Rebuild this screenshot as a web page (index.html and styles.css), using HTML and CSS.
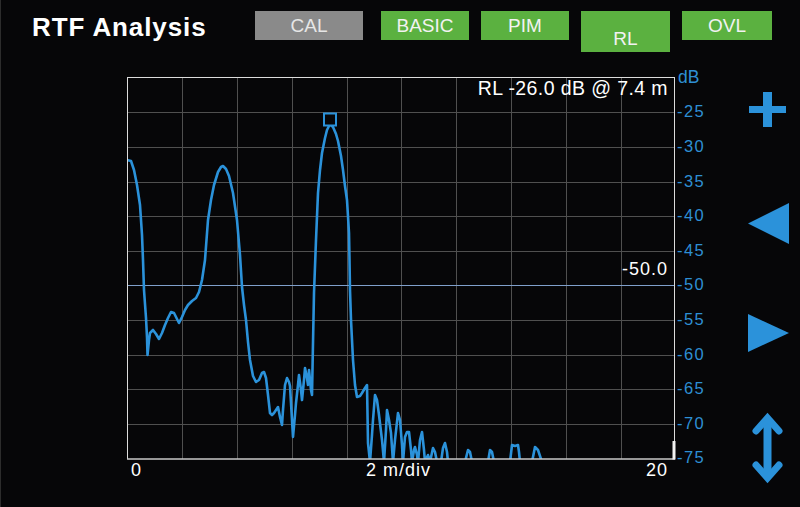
FILE: index.html
```html
<!DOCTYPE html>
<html lang="en">
<head>
<meta charset="utf-8">
<title>RTF Analysis</title>
<link rel="stylesheet" href="styles.css">
</head>
<body>
<div class="screen">
  <header class="top">
    <h1 class="title">RTF Analysis</h1>
    <nav class="tabs">
      <div class="tab tab-gray tab-cal">CAL</div>
      <div class="tab tab-green tab-basic">BASIC</div>
      <div class="tab tab-green tab-pim">PIM</div>
      <div class="tab tab-green tab-rl">RL</div>
      <div class="tab tab-green tab-ovl">OVL</div>
    </nav>
  </header>
  <main class="main">
    <svg class="chart" width="740" height="447" viewBox="0 60 740 447" xmlns="http://www.w3.org/2000/svg">
      <defs>
        <clipPath id="plotclip"><rect x="127" y="77" width="548" height="382"/></clipPath>
      </defs>
      <g class="grid">
        <line x1="182.5" y1="77" x2="182.5" y2="459"/>
        <line x1="237.5" y1="77" x2="237.5" y2="459"/>
        <line x1="292.5" y1="77" x2="292.5" y2="459"/>
        <line x1="347.5" y1="77" x2="347.5" y2="459"/>
        <line x1="401.5" y1="77" x2="401.5" y2="459"/>
        <line x1="456.5" y1="77" x2="456.5" y2="459"/>
        <line x1="511.5" y1="77" x2="511.5" y2="459"/>
        <line x1="566.5" y1="77" x2="566.5" y2="459"/>
        <line x1="621.5" y1="77" x2="621.5" y2="459"/>
        <line x1="127" y1="112.5" x2="675" y2="112.5"/>
        <line x1="127" y1="147.5" x2="675" y2="147.5"/>
        <line x1="127" y1="182.5" x2="675" y2="182.5"/>
        <line x1="127" y1="216.5" x2="675" y2="216.5"/>
        <line x1="127" y1="251.5" x2="675" y2="251.5"/>
        <line x1="127" y1="320.5" x2="675" y2="320.5"/>
        <line x1="127" y1="355.5" x2="675" y2="355.5"/>
        <line x1="127" y1="389.5" x2="675" y2="389.5"/>
        <line x1="127" y1="424.5" x2="675" y2="424.5"/>
      </g>
      <line class="refline" x1="127" y1="285.5" x2="675" y2="285.5"/>
      <polyline class="trace" clip-path="url(#plotclip)" points="127,160 131,161 134,170 137,185 140,205 142,235 143,260 144,290 146,318 147,337 147.5,355 149,340 150,333 153,330 156,334 159,339 162,333 165,325 168,318 171,312 174,313 176,317 179,323 182,317 185,310 188,305 192,301 196,298 199,292 202,280 205,260 208,220 211,200 214,185 218,172 221,167 223,166 226,169 229,176 233,193 237,220 240,255 242,287 244,305 246,320 248,342 250,360 253,376 256,382 259,380 262,373 264,372 266,378 268,395 270,413 272,415 274,413 276,410 278,407 280,417 282,425 283,410 285,385 287,378 289,382 290,386 292,420 293,437 295,415 296,403 298,385 299,375 301,390 302,400 304,380 305,368 307,378 308,385 309,370 311,390 312,395 313,343 314,293 316,240 318,193 320,170 322,153 325,138 327,130 330,124 333,127 336,134 338,141 341,156 343,170 345,186 347,200 349,233 349.5,260 350,290 351,320 353,360 355,385 357,397 360,396 362,393 365,388 367,385 368,443 370,462 372,435 373,420 375,395 377,400 379,415 382,440 384,462 386,430 387,410 389,420 391,433 393,462 395,440 398,413 400,420 402,445 403,462 405,437 407,432 409,432 411,450 412,462 414,450 415,447 417,455 418,462 420,440 422,432 424,450 425,462 428,455 430,462 433,448 435,452 437,462 441,462 443,448 445,443 447,452 448,462 465,462 468,450 470,452 472,462 488,462 490,450 492,452 494,462 510,462 512,445 515,446 518,445 519,452 520,462 532,462 535,447 538,450 542,462 675,462"/>
      <rect class="marker" x="324" y="113.5" width="12" height="12"/>
      <rect class="frame" x="127.5" y="77.5" width="547" height="381.5"/>
      <line class="frame-bottom" x1="127" y1="459" x2="675" y2="459"/>
      <rect class="endbar" x="672.5" y="441" width="3" height="18.5"/>
      <text class="readout" x="668" y="94.5">RL -26.0 dB @ 7.4 m</text>
      <text class="reflabel" x="668" y="275">-50.0</text>
      <g class="ylabels">
        <text class="unit" x="678" y="83">dB</text>
        <text x="677" y="117">-25</text>
        <text x="677" y="152">-30</text>
        <text x="677" y="187">-35</text>
        <text x="677" y="221">-40</text>
        <text x="677" y="256">-45</text>
        <text x="677" y="290">-50</text>
        <text x="677" y="325">-55</text>
        <text x="677" y="360">-60</text>
        <text x="677" y="394">-65</text>
        <text x="677" y="429">-70</text>
        <text x="677" y="463">-75</text>
      </g>
      <g class="xlabels">
        <text x="131" y="476">0</text>
        <text x="366" y="476">2 m/div</text>
        <text x="646" y="476">20</text>
      </g>
    </svg>
    <div class="controls">
      <svg class="icon icon-plus" width="42" height="36" viewBox="748 92 42 36" xmlns="http://www.w3.org/2000/svg">
        <rect x="749" y="106" width="37" height="7"/>
        <rect x="763" y="92" width="9" height="35"/>
      </svg>
      <svg class="icon icon-left" width="42" height="42" viewBox="748 203 42 42" xmlns="http://www.w3.org/2000/svg">
        <polygon points="748,223.5 789,203 789,244"/>
      </svg>
      <svg class="icon icon-right" width="42" height="40" viewBox="748 313 42 40" xmlns="http://www.w3.org/2000/svg">
        <polygon points="748,314 789,333 748,352"/>
      </svg>
      <svg class="icon icon-updown" width="42" height="74" viewBox="748 411 42 74" xmlns="http://www.w3.org/2000/svg">
        <line class="stem" x1="767.5" y1="420" x2="767.5" y2="476"/>
        <polyline class="head" points="756,431 767.5,418 779,431"/>
        <polyline class="head" points="756,465 767.5,478 779,465"/>
      </svg>
    </div>
  </main>
</div>
</body>
</html>
```
FILE: styles.css
```css
html, body {
  margin: 0;
  padding: 0;
  background: #060608;
}

.screen {
  width: 800px;
  height: 507px;
  background: #060608;
  box-shadow: inset 1px 0 0 #2c2c2c;
  overflow: hidden;
  font-family: "Liberation Sans", Arial, Helvetica, sans-serif;
}

.top {
  display: flex;
  align-items: flex-start;
  height: 60px;
  padding-top: 11px;
  box-sizing: border-box;
}

.title {
  margin: 2px 0 0 0;
  width: 255px;
  padding-left: 32px;
  box-sizing: border-box;
  color: #ffffff;
  font-size: 26px;
  font-weight: bold;
  line-height: 29px;
  letter-spacing: 0.9px;
  white-space: nowrap;
}

.tabs {
  display: flex;
  align-items: flex-start;
  gap: 12px;
}

.tab {
  height: 29px;
  display: flex;
  align-items: center;
  justify-content: center;
  font-size: 19px;
  color: #f2f2f2;
}

.tab-gray {
  background: #8a8a8a;
  color: #e6e6e6;
}

.tab-green {
  background: #5bb140;
}

.tab-cal { width: 108px; margin-right: 6px; }
.tab-basic { width: 88px; }
.tab-pim { width: 88px; }
.tab-rl {
  width: 89px;
  height: 41px;
  align-items: flex-end;
  padding-bottom: 2px;
  box-sizing: border-box;
}
.tab-ovl { width: 90px; }

.main {
  display: flex;
  height: 447px;
}

.chart {
  display: block;
  flex: 0 0 740px;
}

.grid line {
  stroke: #4f4f4f;
  stroke-width: 1;
}

.refline {
  stroke: #7f9fcb;
  stroke-width: 1;
}

.trace {
  fill: none;
  stroke: #2b92da;
  stroke-width: 2.6;
  stroke-linejoin: round;
}

.marker {
  fill: #060608;
  stroke: #2b92da;
  stroke-width: 2;
}

.frame {
  fill: none;
  stroke: #dcdcdc;
  stroke-width: 1;
}

.frame-bottom {
  stroke: #bdbdbd;
  stroke-width: 1;
}

.endbar {
  fill: #f2f2f2;
}

.readout {
  fill: #ffffff;
  font-size: 19.5px;
  letter-spacing: 0.4px;
  text-anchor: end;
}

.reflabel {
  fill: #ffffff;
  font-size: 18px;
  letter-spacing: 1px;
  text-anchor: end;
}

.ylabels text {
  fill: #2e8fd4;
  font-size: 16.5px;
  letter-spacing: 1.4px;
}

.ylabels .unit {
  font-size: 17.5px;
  letter-spacing: 0;
}

.xlabels text {
  fill: #ffffff;
  font-size: 18px;
  letter-spacing: 1px;
}

.controls {
  display: flex;
  flex-direction: column;
  padding-left: 8px;
  padding-top: 32px;
}

.icon {
  display: block;
  fill: #2b92da;
}

.icon-left { margin-top: 75px; }
.icon-right { margin-top: 68px; }
.icon-updown { margin-top: 58px; }

.icon-updown .stem {
  stroke: #2b92da;
  stroke-width: 8;
}

.icon-updown .head {
  fill: none;
  stroke: #2b92da;
  stroke-width: 7;
  stroke-linecap: round;
  stroke-linejoin: miter;
}
```
